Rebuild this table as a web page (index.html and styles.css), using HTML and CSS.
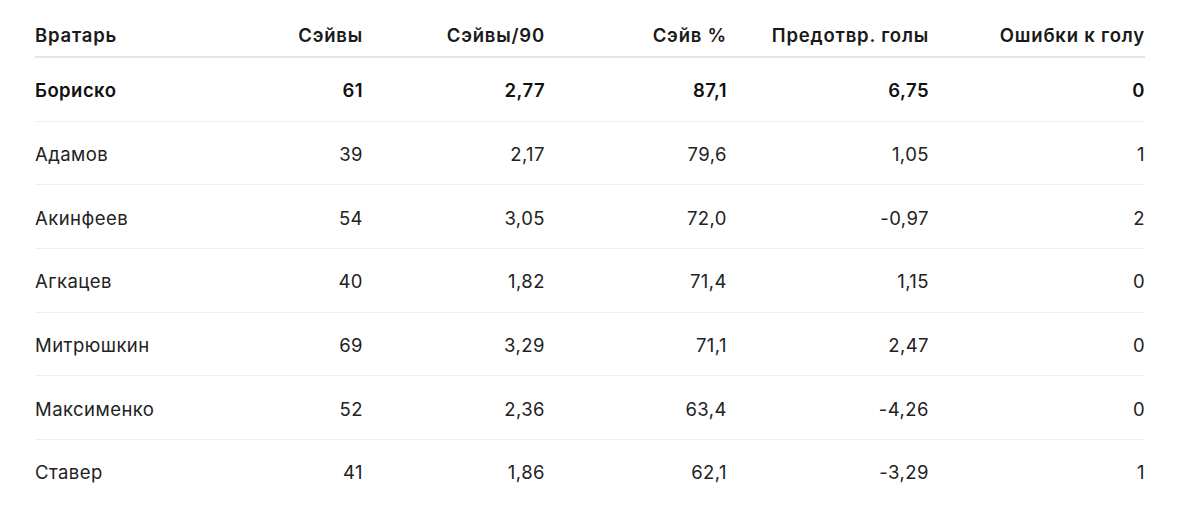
FILE: index.html
```html
<!DOCTYPE html>
<html lang="ru">
<head>
<meta charset="utf-8">
<link rel="stylesheet" href="styles.css">
</head>
<body>
<div class="wrap">
<table class="stats">
  <colgroup>
    <col class="c-name"><col class="c-saves"><col class="c-s90"><col class="c-pct"><col class="c-prev"><col class="c-err">
  </colgroup>
  <thead>
    <tr><th class="left">Вратарь</th><th>Сэйвы</th><th>Сэйвы/90</th><th>Сэйв %</th><th>Предотвр. голы</th><th>Ошибки к голу</th></tr>
  </thead>
  <tbody>
    <tr class="top"><td class="left">Бориско</td><td>61</td><td>2,77</td><td>87,1</td><td>6,75</td><td>0</td></tr>
    <tr><td class="left">Адамов</td><td>39</td><td>2,17</td><td>79,6</td><td>1,05</td><td>1</td></tr>
    <tr><td class="left">Акинфеев</td><td>54</td><td>3,05</td><td>72,0</td><td>-0,97</td><td>2</td></tr>
    <tr><td class="left">Агкацев</td><td>40</td><td>1,82</td><td>71,4</td><td>1,15</td><td>0</td></tr>
    <tr><td class="left">Митрюшкин</td><td>69</td><td>3,29</td><td>71,1</td><td>2,47</td><td>0</td></tr>
    <tr><td class="left">Максименко</td><td>52</td><td>2,36</td><td>63,4</td><td>-4,26</td><td>0</td></tr>
    <tr class="last"><td class="left">Ставер</td><td>41</td><td>1,86</td><td>62,1</td><td>-3,29</td><td>1</td></tr>
  </tbody>
</table>
</div>
</body>
</html>
```

FILE: styles.css
```css
html, body {
  margin: 0;
  padding: 0;
  background: #ffffff;
}
body {
  font-family: Inter, "Liberation Sans", Arial, sans-serif;
  color: #1c1c1c;
}
.wrap {
  padding: 12px 55px 0 35px;
}
.stats {
  width: 1110px;
  border-collapse: collapse;
  table-layout: fixed;
}
.c-name { width: 146px; }
.c-saves { width: 182px; }
.c-s90 { width: 182px; }
.c-pct { width: 182px; }
.c-prev { width: 202px; }
.c-err { width: 216px; }
.stats th,
.stats td {
  text-align: right;
  font-size: 18.5px;
  line-height: 22px;
  padding: 0;
  white-space: nowrap;
}
.stats th.left,
.stats td.left {
  text-align: left;
}
.stats th {
  font-weight: 600;
  color: #1a1a1a;
  letter-spacing: 0.8px;
  padding: 12px 0 10px;
  border-bottom: 2px solid #e6e6e6;
}
.stats td {
  font-weight: 400;
  color: #222222;
  letter-spacing: 0.45px;
  padding: 21.3px 0 19.4px;
  border-bottom: 1px solid #efefef;
}
.stats tr.last td {
  border-bottom: none;
}
.stats tr.top td {
  font-weight: 600;
  color: #111111;
}
```
